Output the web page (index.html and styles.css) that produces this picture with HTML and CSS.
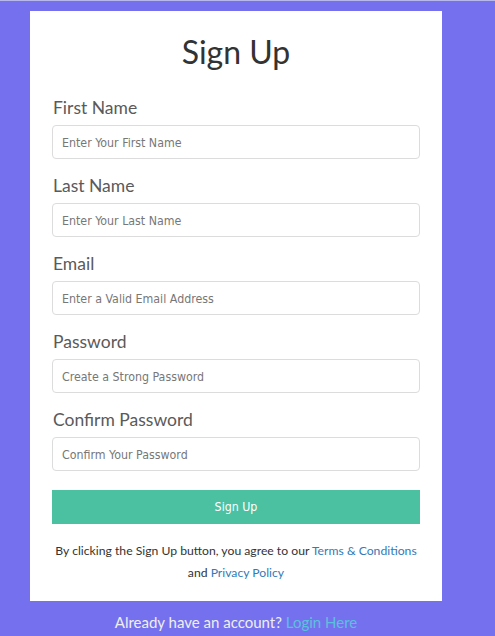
FILE: index.html
```html
<!DOCTYPE html>
<html>
<head>
<meta charset="utf-8">
<link rel="stylesheet" href="styles.css">
</head>
<body>
<div class="page">
  <form class="card">
    <h1 class="title">Sign Up</h1>
    <div class="group">
      <label class="label">First Name</label>
      <input class="field" type="text" placeholder="Enter Your First Name">
    </div>
    <div class="group">
      <label class="label">Last Name</label>
      <input class="field" type="text" placeholder="Enter Your Last Name">
    </div>
    <div class="group">
      <label class="label">Email</label>
      <input class="field" type="text" placeholder="Enter a Valid Email Address">
    </div>
    <div class="group">
      <label class="label">Password</label>
      <input class="field" type="text" placeholder="Create a Strong Password">
    </div>
    <div class="group">
      <label class="label">Confirm Password</label>
      <input class="field" type="text" placeholder="Confirm Your Password">
    </div>
    <button class="btn" type="button">Sign Up</button>
    <p class="terms">By clicking the Sign Up button, you agree to our <a class="link">Terms &amp; Conditions</a><br>and <a class="link">Privacy Policy</a></p>
  </form>
  <p class="footer">Already have an account? <a class="login">Login Here</a></p>
</div>
</body>
</html>
```

FILE: styles.css
```css
html, body {
  margin: 0;
  padding: 0;
}
body {
  background: #7571ee;
  border-top: 1px solid #b9b8ec;
  height: 635px;
  font-family: "Lato", "Liberation Sans", sans-serif;
}
.page {
  width: 412px;
  margin-left: 30px;
  padding-top: 10px;
}
.card {
  background: #fff;
  padding: 24px 22px 17px;
  display: flex;
  flex-direction: column;
}
.title {
  margin: 0 0 28px;
  text-align: center;
  font-weight: 400;
  font-size: 32px;
  line-height: 34px;
  color: #333;
}
.group {
  display: flex;
  flex-direction: column;
  margin-bottom: 16px;
}
.label {
  font-size: 17.5px;
  line-height: 22px;
  color: #5a5a5a;
  margin: 0 0 6px 1px;
}
.field {
  height: 34px;
  box-sizing: border-box;
  border: 1px solid #dcdcdc;
  border-radius: 4px;
  padding: 1px 9px 0;
  font-family: "DejaVu Sans Condensed", "DejaVu Sans", sans-serif;
  font-stretch: condensed;
  font-size: 12.3px;
  color: #555;
  outline: none;
}
.field::placeholder {
  color: #777;
}
.btn {
  height: 34px;
  border: 0;
  background: #4cc1a1;
  color: #fff;
  font-family: "DejaVu Sans Condensed", "DejaVu Sans", sans-serif;
  font-stretch: condensed;
  font-size: 12.3px;
  margin: 3px 0 0;
  padding: 0;
}
.terms {
  margin: 16px -4px 0;
  text-align: center;
  font-size: 12.2px;
  line-height: 22px;
  color: #333;
  white-space: nowrap;
}
.link {
  color: #337ab7;
}
.footer {
  margin: 12px 0 0;
  text-align: center;
  font-size: 15px;
  line-height: 18px;
  color: #eeeeee;
}
.login {
  color: #5bc0de;
}
```
